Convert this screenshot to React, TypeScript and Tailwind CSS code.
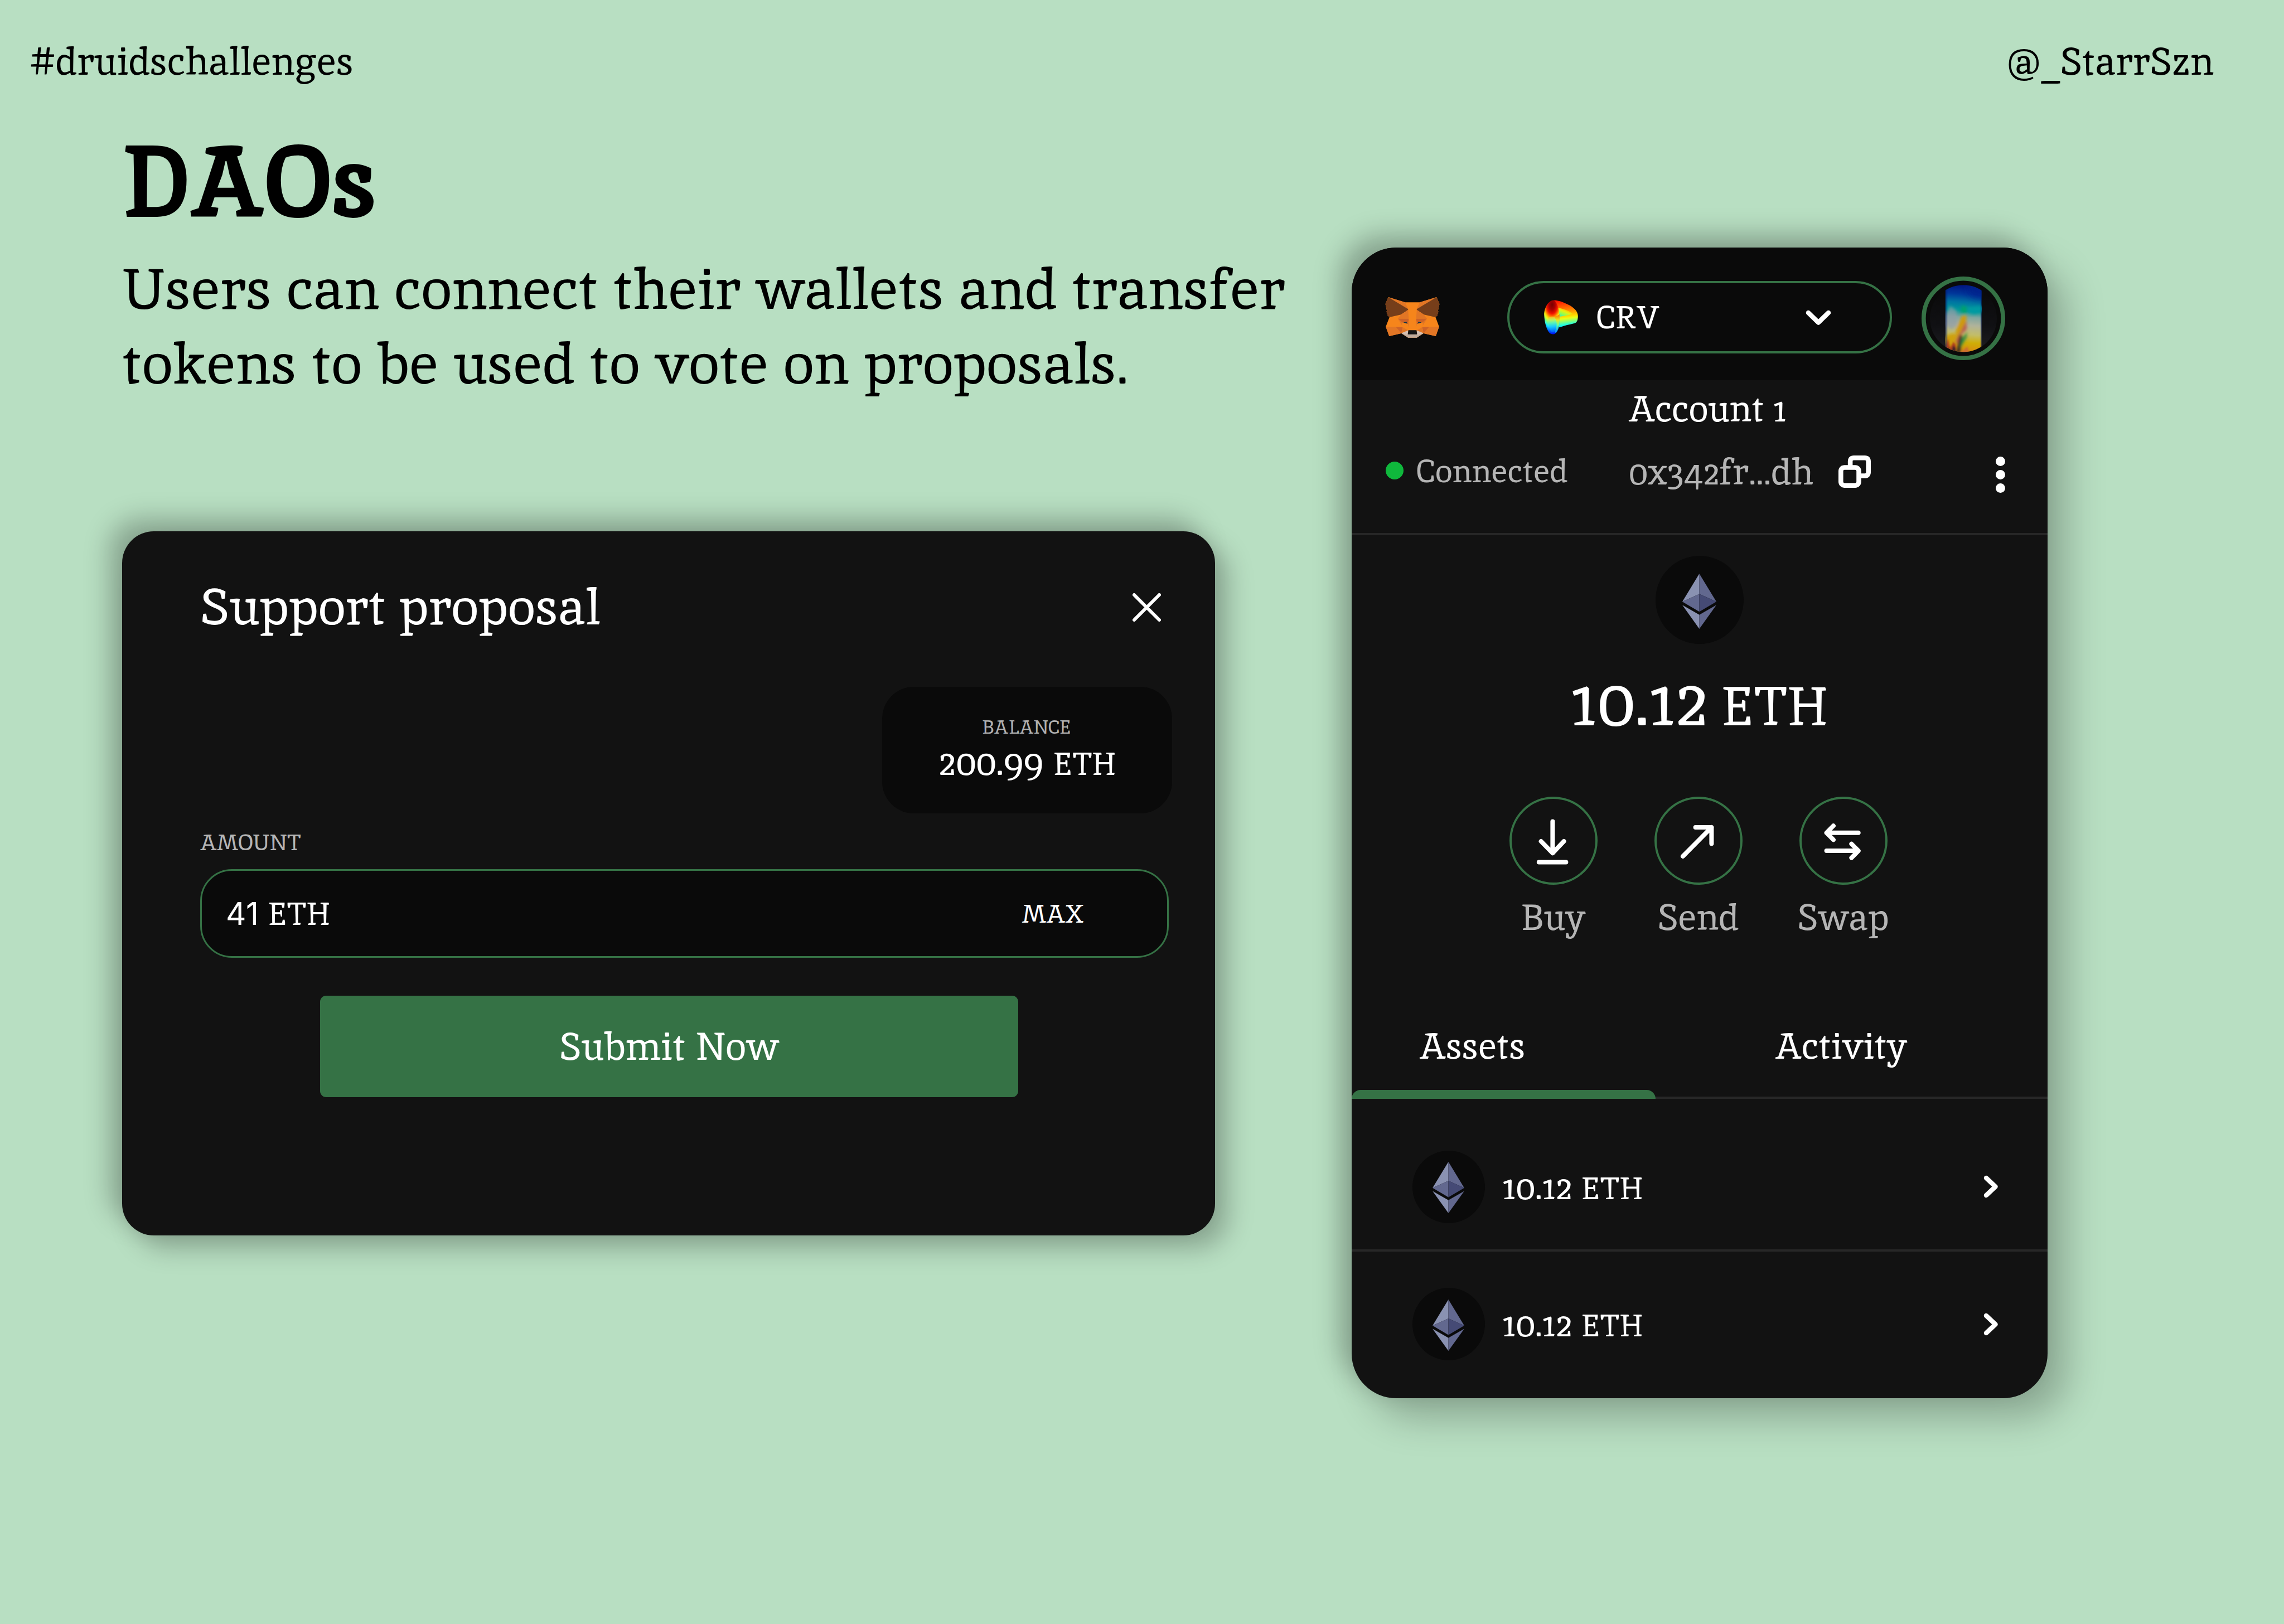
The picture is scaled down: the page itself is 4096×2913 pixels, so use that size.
const SLAB = "font-['Inika','Bitter','DejaVu_Serif_Condensed','DejaVu_Serif',serif]";

function EthMark({ className }: { className: string }) {
  return (
    <svg viewBox="0 0 129 209" className={className} aria-hidden="true">
      <polygon points="64.5,0 0,106 64.5,77" fill="#8a92b2" />
      <polygon points="64.5,0 129,106 64.5,77" fill="#62688f" />
      <polygon points="0,106 64.5,77 64.5,144" fill="#62688f" />
      <polygon points="129,106 64.5,77 64.5,144" fill="#454a75" />
      <polygon points="0,119 64.5,156 64.5,209" fill="#8a92b2" />
      <polygon points="129,119 64.5,156 64.5,209" fill="#62688f" />
    </svg>
  );
}

/* One half of the fox's facial facets; the other half is the mirror image. */
function FoxHalf() {
  return (
    <>
      <polygon points="180,324 308,363 332,415" fill="#e27625" />
      <polygon
        points="180,324 332,415 330,422 277,457 189,477 170,463 175,460 167,449 171,446 163,433 170,429 158,376"
        fill="#763e1a"
      />
      <polygon points="331,421 336,490 253,489 277,457" fill="#e27625" />
      <polygon points="253,489 285,517 285,541" fill="#e27625" />
      <polygon points="255,489 336,490 330,528 318,511 288,518" fill="#cd6328" />
      <polygon points="336,490 330,528 339,553" fill="#e27625" />
      <polygon points="294,517 318,511 327,527" fill="#143347" />
      <polygon points="161,549 238,550 280,600 187,621" fill="#e27625" />
      <polygon points="237,550 289,552 280,600" fill="#cd6328" />
      <polygon points="289,552 330,577 280,599" fill="#e27625" />
      <polygon points="279,599 332,577 329,614" fill="#d5bfb2" />
    </>
  );
}

function Fox() {
  return (
    <svg viewBox="158 324 412 310" className="h-[73px] w-[98px]" role="img" aria-label="MetaMask">
      <polygon
        points="180,324 308,363 420,363 548,324 570,376 558,430 540,477 567,549 542,621 449,599 397,633 331,633 279,599 187,621 161,549 189,477 170,430 158,376"
        fill="#f6851b"
      />
      <polygon points="279,599 329,600 399,600 449,599 397,633 331,633" fill="#c0ac9d" />
      <FoxHalf />
      <g transform="translate(728 0) scale(-1 1)">
        <FoxHalf />
      </g>
      <polygon points="333,576 395,576 400,607 328,607" fill="#161616" />
    </svg>
  );
}

function CurveLogo() {
  return (
    <svg viewBox="68 226 262 266" className="h-[62px] w-[61px]" role="img" aria-label="Curve">
      <defs>
        <linearGradient id="cBody" gradientUnits="userSpaceOnUse" x1="190" y1="232" x2="215" y2="432">
          <stop offset="0" stopColor="#ff1000" />
          <stop offset=".2" stopColor="#ff5000" />
          <stop offset=".42" stopColor="#ff9000" />
          <stop offset=".62" stopColor="#ffdc00" />
          <stop offset=".7" stopColor="#e8ff1a" />
          <stop offset=".82" stopColor="#86ff78" />
          <stop offset=".92" stopColor="#30ffd0" />
          <stop offset="1" stopColor="#00e8ff" />
        </linearGradient>
        <linearGradient id="cHole" gradientUnits="userSpaceOnUse" x1="235" y1="295" x2="210" y2="354">
          <stop offset="0" stopColor="#ffb400" />
          <stop offset=".35" stopColor="#e8f010" />
          <stop offset=".7" stopColor="#90ff50" />
          <stop offset="1" stopColor="#50f0a0" />
        </linearGradient>
        <radialGradient
          id="cLoop"
          gradientUnits="userSpaceOnUse"
          cx="0"
          cy="0"
          r="230"
          gradientTransform="translate(130 262) scale(.6 1)"
        >
          <stop offset="0" stopColor="#780000" />
          <stop offset=".17" stopColor="#a80000" />
          <stop offset=".3" stopColor="#f01000" />
          <stop offset=".39" stopColor="#ff6a00" />
          <stop offset=".46" stopColor="#ffc800" />
          <stop offset=".53" stopColor="#e8ff20" />
          <stop offset=".63" stopColor="#77ff88" />
          <stop offset=".74" stopColor="#11eeff" />
          <stop offset=".85" stopColor="#0080ff" />
          <stop offset="1" stopColor="#0000f0" />
        </radialGradient>
        <linearGradient id="cMouth" gradientUnits="userSpaceOnUse" x1="120" y1="352" x2="135" y2="478">
          <stop offset="0" stopColor="#ffc020" />
          <stop offset=".2" stopColor="#b0f070" />
          <stop offset=".4" stopColor="#50f0c8" />
          <stop offset=".65" stopColor="#18b8ff" />
          <stop offset="1" stopColor="#0060ff" />
        </linearGradient>
        <linearGradient id="cRim" gradientUnits="userSpaceOnUse" x1="165" y1="340" x2="165" y2="475">
          <stop offset="0" stopColor="#ff7000" />
          <stop offset=".3" stopColor="#e8e820" />
          <stop offset=".6" stopColor="#60ffa0" />
          <stop offset="1" stopColor="#0090ff" />
        </linearGradient>
      </defs>
      <path
        d="M146 228C185 230 225 246 262 266C300 286 330 318 329 350C329 380 322 402 300 406C262 416 220 424 187 437L150 380Z"
        fill="url(#cBody)"
      />
      <path d="M176 286C215 294 262 308 288 332C262 344 222 348 188 355Z" fill="url(#cHole)" />
      <path
        d="M146 228C104 226 70 282 69 340C71 392 84 440 100 466C114 490 134 492 148 489C176 474 189 432 188 372C186 306 176 256 146 228Z"
        fill="url(#cLoop)"
      />
      <path
        d="M100 366C112 352 134 350 148 358C166 380 170 420 158 455C150 472 138 478 126 472C108 450 98 410 100 366Z"
        fill="url(#cMouth)"
        opacity=".75"
      />
      <path
        d="M142 352C166 352 180 344 187 335C190 390 186 440 162 476C150 484 150 470 158 455C172 410 166 376 142 352Z"
        fill="url(#cRim)"
      />
    </svg>
  );
}

function Avatar() {
  return (
    <svg viewBox="46 53 630 630" className="mt-[4px] h-[150px] w-[150px]" role="img" aria-label="Avatar">
      <defs>
        <clipPath id="avCircle">
          <circle cx="361" cy="369" r="252" />
        </clipPath>
        <clipPath id="avStripe">
          <rect x="225" y="110" width="273" height="520" />
        </clipPath>
        <linearGradient id="avBack" x1="0" y1="0" x2="0" y2="1">
          <stop offset="0" stopColor="#090909" />
          <stop offset=".6" stopColor="#101013" />
          <stop offset="1" stopColor="#1d1d22" />
        </linearGradient>
        <linearGradient id="avSky" gradientUnits="userSpaceOnUse" x1="385" y1="116" x2="355" y2="621">
          <stop offset="0" stopColor="#02147e" />
          <stop offset=".14" stopColor="#00379a" />
          <stop offset=".26" stopColor="#0074a2" />
          <stop offset=".38" stopColor="#009a9a" />
          <stop offset=".48" stopColor="#7fa6a0" />
          <stop offset=".6" stopColor="#b0b39b" />
          <stop offset=".74" stopColor="#c3bd68" />
          <stop offset=".86" stopColor="#cfae05" />
          <stop offset="1" stopColor="#d98a12" />
        </linearGradient>
        <linearGradient id="avEdge" x1="0" y1="0" x2="1" y2="0">
          <stop offset="0" stopColor="#001a70" stopOpacity=".75" />
          <stop offset=".07" stopColor="#001a70" stopOpacity="0" />
          <stop offset=".95" stopColor="#001a70" stopOpacity="0" />
          <stop offset="1" stopColor="#001a70" stopOpacity=".35" />
        </linearGradient>
        <filter id="avHaze" x="-50%" y="-50%" width="200%" height="200%">
          <feGaussianBlur stdDeviation="24" />
        </filter>
        <filter id="avSoft" x="-40%" y="-40%" width="180%" height="180%">
          <feGaussianBlur stdDeviation="12" />
        </filter>
        <filter id="avSofter" x="-40%" y="-40%" width="180%" height="180%">
          <feGaussianBlur stdDeviation="6" />
        </filter>
      </defs>
      <circle cx="361" cy="368" r="299" fill="none" stroke="#357245" strokeWidth="32" />
      <g clipPath="url(#avCircle)">
        <rect x="109" y="117" width="504" height="504" fill="url(#avBack)" />
        <g clipPath="url(#avStripe)">
          <rect x="225" y="110" width="273" height="520" fill="url(#avSky)" />
          <polygon points="380,80 540,80 540,225 440,215 400,180" fill="#02208c" opacity=".75" filter="url(#avHaze)" />
          <g filter="url(#avSoft)">
            <polygon points="390,285 520,275 520,312 440,335 390,315" fill="#009aa2" />
            <polygon points="262,275 310,310 312,420 270,450 232,420 236,330" fill="#8f9ca6" opacity=".7" />
            <polygon points="345,270 388,280 386,335 345,325" fill="#00a070" />
            <polygon points="350,350 384,345 380,400 330,490 302,540 308,450" fill="#cf9a08" />
            <polygon points="384,385 386,450 345,490 312,570 302,540 345,460" fill="#b9504a" opacity=".9" />
            <polygon points="335,490 352,500 335,635 305,635" fill="#2c2026" />
            <polygon points="388,470 386,510 350,570 335,590 345,530" fill="#2f8a45" />
            <polygon points="225,510 250,490 300,480 305,560 225,560" fill="#cfa010" />
          </g>
          <g filter="url(#avSofter)">
            <polygon points="225,580 245,520 262,590 285,545 304,565 304,640 225,640" fill="#b2431f" />
            <polygon points="232,640 250,580 264,640 285,570 302,590 304,640" fill="#3a2028" />
            <polygon points="345,620 390,580 410,640 330,640" fill="#c8663a" opacity=".8" />
          </g>
          <rect x="225" y="110" width="273" height="520" fill="url(#avEdge)" />
        </g>
      </g>
    </svg>
  );
}

function ChevronRight() {
  return (
    <svg viewBox="0 0 27 41" className="h-[41px] w-[27px]" fill="none" stroke="#fff" strokeWidth="8.5" strokeLinecap="round" strokeLinejoin="round">
      <path d="M5 5L21.5 20.5L5 36" />
    </svg>
  );
}

const ACTIONS = [
  { label: "Buy", path: "M77.4 44.4V101.3M56.6 80L77.4 101.3L97.6 80M52.8 117.5H101.4" },
  { label: "Send", path: "M51 106.9L102.4 55M73.6 55H102.4V84.2" },
  { label: "Swap", path: "M105.7 64.8H48.6L60.9 52.3M48.6 64.8L60.9 77.3M48.6 97.1H105.7L93.4 84.7M105.7 97.1L93.4 109.6" },
];

function Action({ label, path }: { label: string; path: string }) {
  return (
    <button className="flex w-[158px] flex-col items-center">
      <svg viewBox="0 0 158 158" className="size-[158px]" fill="none">
        <circle cx="79" cy="79" r="77" stroke="#357245" strokeWidth="4" />
        <path d={path} stroke="#fff" strokeWidth="8" strokeLinecap="round" strokeLinejoin="round" />
      </svg>
      <span className="mt-[18px] text-[64.3px] leading-[80px] whitespace-nowrap text-[#b5b5b5]">{label}</span>
    </button>
  );
}

function AssetRow({ className }: { className: string }) {
  return (
    <div className={`flex items-center pr-[88px] pl-[109px] ${className}`}>
      <div className="flex size-[130px] shrink-0 items-center justify-center rounded-full bg-[#0a0a0a]">
        <EthMark className="mt-[3px] h-[92px] w-[57px]" />
      </div>
      <span className="mb-[2px] ml-[32px] text-[65.4px] leading-[70px]">
        10.12 <span className="text-[56px] leading-none">ETH</span>
      </span>
      <span className="ml-auto">
        <ChevronRight />
      </span>
    </div>
  );
}

function ProposalCard() {
  return (
    <section className="mt-[234px] flex h-[1263px] w-[1960px] flex-col rounded-[57px] bg-[#121212] pt-[85px] pr-[77px] pl-[140px] text-white shadow-[-23px_-23px_46px_rgba(0,0,0,0.25),23px_23px_46px_rgba(0,0,0,0.25)]">
      <div className="flex h-[100px] items-center justify-between">
        <h2 className="text-[91px] leading-[100px]">Support proposal</h2>
        <svg viewBox="0 0 51 51" className="mt-[3px] mr-[20px] size-[51px]" fill="none" stroke="#fff" strokeWidth="6" strokeLinecap="round">
          <path d="M3 3L48 48M48 3L3 48" />
        </svg>
      </div>
      <div className="mt-[94px] flex h-[227px] w-[520px] flex-col items-center self-end rounded-[57px] bg-[#0a0a0a] pt-[52px]">
        <span className="mr-[2px] text-[34.1px] leading-[40px] text-[#b0b0b0]">BALANCE</span>
        <span className="mt-[7px] text-[68.3px] leading-[70px]">
          200.99 <span className="text-[57px] leading-none">ETH</span>
        </span>
      </div>
      <label className="mt-[28px] text-[40px] leading-[48px] text-[#b5b5b5]">AMOUNT</label>
      <div className="mt-[24px] flex h-[159px] w-[1737px] items-center justify-between rounded-[57px] border-[3px] border-[#357245] bg-[#0a0a0a] pr-[150px] pl-[43px]">
        <span className="text-[56.5px] leading-[70px]">
          <span className="font-['Inter','Roboto',sans-serif] leading-none tracking-[0.01em]">41 </span>
          ETH
        </span>
        <button className="text-[45.5px] leading-[60px]">MAX</button>
      </div>
      <button className="mt-[68px] ml-[215px] h-[182px] w-[1252px] rounded-[11px] bg-[#357245] text-[68.3px] leading-[80px]">
        Submit Now
      </button>
    </section>
  );
}

function Wallet() {
  return (
    <section className="mt-[294px] flex h-[2064px] w-[1248px] shrink-0 flex-col rounded-[80px] bg-[#121212] text-white shadow-[-23px_-23px_46px_rgba(0,0,0,0.25),34px_34px_68px_rgba(0,0,0,0.25)]">
      <div className="flex h-[238px] items-center rounded-t-[80px] bg-[#0a0a0a] pt-[12px] pl-[60px]">
        <Fox />
        <div className="ml-[121px] flex h-[130px] w-[690px] items-center rounded-full border-4 border-[#357245] pr-[105px] pl-[62px]">
          <CurveLogo />
          <span className="ml-[34px] text-[57px] leading-[70px]">CRV</span>
          <svg viewBox="0 0 46 28" className="mt-[2px] ml-auto h-[28px] w-[46px]" fill="none" stroke="#fff" strokeWidth="8.5" strokeLinecap="round" strokeLinejoin="round">
            <path d="M5 5L23 22.5L41 5" />
          </svg>
        </div>
        <div className="ml-[53px]">
          <Avatar />
        </div>
      </div>

      <div className="flex h-[278px] flex-col border-b-4 border-[#272727] pt-[11px]">
        <p className="pl-[497px] text-[64.3px] leading-[80px]">Account 1</p>
        <div className="mt-[33px] flex h-[80px] items-center pl-[61px] text-[#b5b5b5]">
          <span className="mb-[4px] size-[32px] rounded-full bg-[#0fb83c]" />
          <span className="mb-[3px] ml-[24px] w-[380px] text-[56.8px] leading-[80px]">Connected</span>
          <span className="w-[376px] text-[64.3px] leading-[80px]">0x342fr...dh</span>
          <svg viewBox="0 0 81 81" className="size-[58px]" fill="none" stroke="#fff" strokeWidth="12">
            <rect x="6" y="30" width="45" height="45" rx="9" />
            <path d="M29.5 26V15q0-9 9-9H66q9 0 9 9V42q0 9-9 9H56" />
          </svg>
          <span className="mt-[11px] mr-[76px] ml-auto flex flex-col gap-[7px]">
            <span className="size-[17px] rounded-full bg-white" />
            <span className="size-[17px] rounded-full bg-white" />
            <span className="size-[17px] rounded-full bg-white" />
          </span>
        </div>
      </div>

      <div className="mt-[37px] flex size-[158px] items-center justify-center self-center rounded-full bg-[#0a0a0a]">
        <EthMark className="mt-[5px] h-[99px] w-[61px]" />
      </div>
      <p className="mt-[46px] h-[110px] text-center text-[128.4px] leading-[110px]">
        10.12<span className="text-[97px] leading-none whitespace-pre"> ETH</span>
      </p>

      <div className="mt-[118px] flex gap-[102px] pl-[283px]">
        {ACTIONS.map((a) => (
          <Action key={a.label} label={a.label} path={a.path} />
        ))}
      </div>

      <div className="mt-[151px] flex h-[135px] items-start border-b-4 border-[#272727] text-[64.3px] leading-[80px]">
        <div className="relative h-[135px] w-[545px] shrink-0 pl-[122px]">
          Assets
          <span className="absolute bottom-0 left-0 h-[16px] w-[545px] rounded-t-[16px] bg-[#357245]" />
        </div>
        <span className="ml-[215px]">Activity</span>
      </div>
      <AssetRow className="h-[274px] border-b-4 border-[#272727] pt-[45px]" />
      <AssetRow className="pt-[65px]" />
    </section>
  );
}

export default function App() {
  return (
    <main className={`flex h-[2913px] w-[4096px] flex-col overflow-hidden bg-[#b8dfc2] text-black ${SLAB}`}>
      <header className="flex justify-between pt-[70px] pr-[126px] pl-[54px] text-[68.3px] leading-[80px]">
        <span>#druidschallenges</span>
        <span>@_StarrSzn</span>
      </header>
      <div className="flex">
        <div className="flex w-[2423.5px] shrink-0 flex-col pt-[85px] pl-[219px]">
          <h1 className="text-[182px] leading-[180px] font-bold">DAOs</h1>
          <p className="mt-[36px] mb-px text-[102.4px] leading-[133.5px] whitespace-nowrap">
            Users can connect their wallets and transfer
            <br />
            tokens to be used to vote on proposals.
          </p>
          <ProposalCard />
        </div>
        <Wallet />
      </div>
    </main>
  );
}
